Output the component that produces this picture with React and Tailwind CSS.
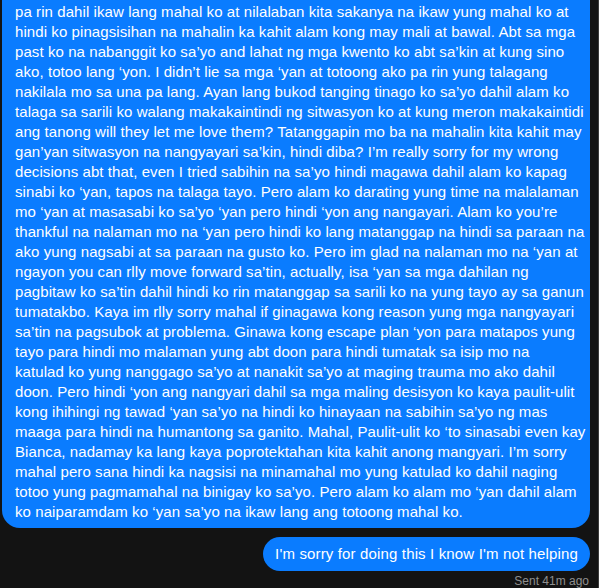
import React from 'react';

const lines = [
  'pa rin dahil ikaw lang mahal ko at nilalaban kita sakanya na ikaw yung mahal ko at',
  'hindi ko pinagsisihan na mahalin ka kahit alam kong may mali at bawal. Abt sa mga',
  'past ko na nabanggit ko sa’yo and lahat ng mga kwento ko abt sa’kin at kung sino',
  'ako, totoo lang ‘yon. I didn’t lie sa mga ‘yan at totoong ako pa rin yung talagang',
  'nakilala mo sa una pa lang. Ayan lang bukod tanging tinago ko sa’yo dahil alam ko',
  'talaga sa sarili ko walang makakaintindi ng sitwasyon ko at kung meron makakaintidi',
  'ang tanong will they let me love them? Tatanggapin mo ba na mahalin kita kahit may',
  'gan’yan sitwasyon na nangyayari sa’kin, hindi diba? I’m really sorry for my wrong',
  'decisions abt that, even I tried sabihin na sa’yo hindi magawa dahil alam ko kapag',
  'sinabi ko ‘yan, tapos na talaga tayo. Pero alam ko darating yung time na malalaman',
  'mo ‘yan at masasabi ko sa’yo ‘yan pero hindi ‘yon ang nangayari. Alam ko you’re',
  'thankful na nalaman mo na ‘yan pero hindi ko lang matanggap na hindi sa paraan na',
  'ako yung nagsabi at sa paraan na gusto ko. Pero im glad na nalaman mo na ‘yan at',
  'ngayon you can rlly move forward sa’tin, actually, isa ‘yan sa mga dahilan ng',
  'pagbitaw ko sa’tin dahil hindi ko rin matanggap sa sarili ko na yung tayo ay sa ganun',
  'tumatakbo. Kaya im rlly sorry mahal if ginagawa kong reason yung mga nangyayari',
  'sa’tin na pagsubok at problema. Ginawa kong escape plan ‘yon para matapos yung',
  'tayo para hindi mo malaman yung abt doon para hindi tumatak sa isip mo na',
  'katulad ko yung nanggago sa’yo at nanakit sa’yo at maging trauma mo ako dahil',
  'doon. Pero hindi ‘yon ang nangyari dahil sa mga maling desisyon ko kaya paulit-ulit',
  'kong ihihingi ng tawad ‘yan sa’yo na hindi ko hinayaan na sabihin sa’yo ng mas',
  'maaga para hindi na humantong sa ganito. Mahal, Paulit-ulit ko ‘to sinasabi even kay',
  'Bianca, nadamay ka lang kaya poprotektahan kita kahit anong mangyari. I’m sorry',
  'mahal pero sana hindi ka nagsisi na minamahal mo yung katulad ko dahil naging',
  'totoo yung pagmamahal na binigay ko sa’yo. Pero alam ko alam mo ‘yan dahil alam',
  'ko naiparamdam ko ‘yan sa’yo na ikaw lang ang totoong mahal ko.',
];

export default function App() {
  return (
    <div className="flex h-[588px] w-[599px] overflow-hidden bg-[#131313] font-['Liberation_Sans',Arial,sans-serif]">
      <div className="flex flex-1 flex-col items-end pl-[2px] pr-[8px]">
        {/* long message, top scrolled out of view */}
        <div className="w-[588px] rounded-b-[18px] bg-[#0a7cff] px-[13px] pt-[2px] pb-[6px] text-[15px] leading-[20px] tracking-[0.08px] text-white">
          {lines.map((line, i) => (
            <div key={i} className="whitespace-nowrap">
              {line}
            </div>
          ))}
        </div>

        <div className="mt-[9px] rounded-full bg-[#0a7cff] px-[12px] py-[7px] text-[15px] leading-[20px] tracking-[0.15px] text-white">
          I'm sorry for doing this I know I'm not helping
        </div>

        <div className="mt-[2px] pr-[1px] text-[12px] leading-[16px] text-[#8f8f8f]">
          Sent 41m ago
        </div>
      </div>
      <div className="w-[1px] bg-[#3c3c3c]" />
    </div>
  );
}
